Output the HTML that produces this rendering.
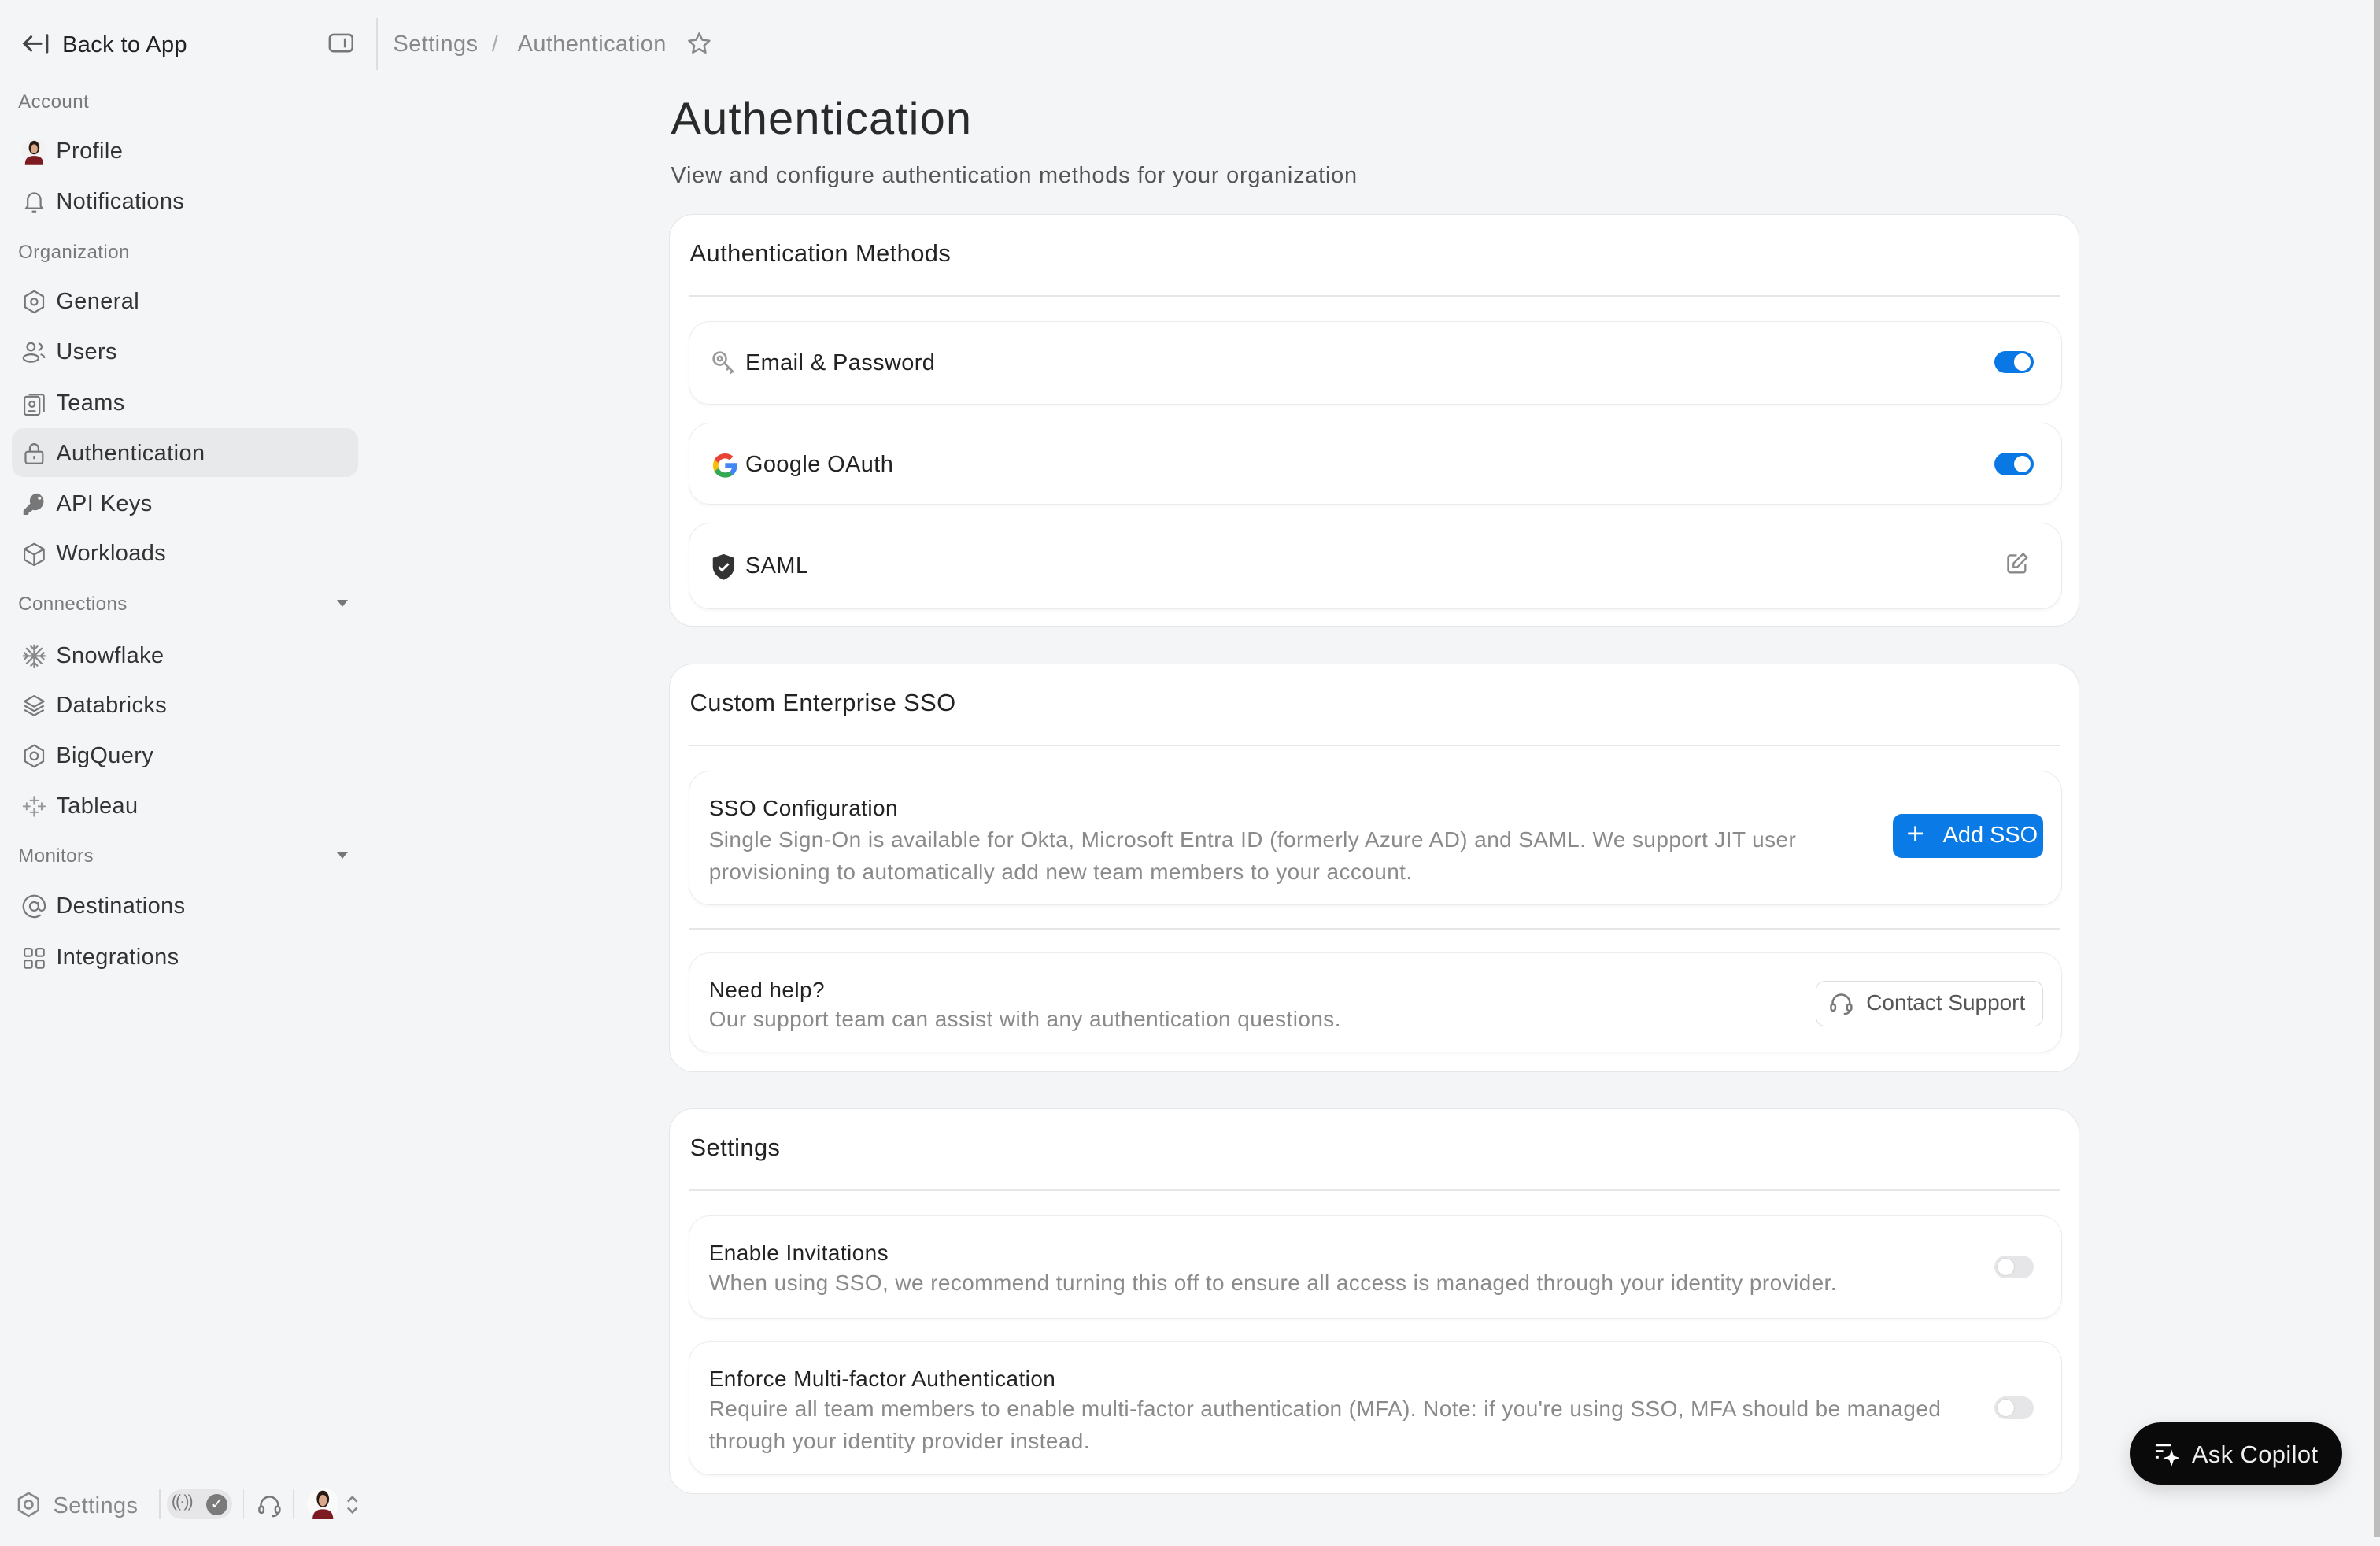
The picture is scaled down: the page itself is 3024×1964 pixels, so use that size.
<!DOCTYPE html>
<html><head><meta charset="utf-8"><style>
html,body{margin:0;padding:0}
html{zoom:1.92857}
body{width:1568px;height:1018px;background:#f4f5f7;font-family:"Liberation Sans",sans-serif;color:#2a2a2a;position:relative;overflow:hidden;letter-spacing:0.22px}
.a{position:absolute;white-space:nowrap}
.t15{font-size:15px;line-height:18px}
.lab{font-size:12.5px;color:#7a7a7a;line-height:15px}
.item{position:absolute;left:14px;height:20px;display:flex;align-items:center;font-size:15px;color:#333;margin-top:1px}
.item svg{width:17px;height:17px;margin-right:6px;flex:none}
.card{position:absolute;left:441px;width:929px;background:#fff;border:1px solid #e6e6e8;border-radius:16px;box-sizing:border-box}
.hd{position:absolute;left:13px;font-size:16px;color:#222}
.dv{position:absolute;left:12px;right:12px;height:1px;background:#e6e6e8}
.row{position:absolute;left:12px;right:11px;border:1px solid #ececee;border-radius:14px;box-shadow:0 1px 2px rgba(0,0,0,.04);box-sizing:border-box}
.tg{position:absolute;width:26px;height:15px;border-radius:8px}
.tg i{position:absolute;top:2px;width:11px;height:11px;border-radius:50%;background:#fff}
.on{background:#0a78e4}.on i{right:2px}
.off{background:#e6e6e8}.off i{left:2px;box-shadow:0 0 1px rgba(0,0,0,.2)}
.ti{position:absolute;left:13px;font-size:14.5px;color:#222;margin-top:1px}
.ds{position:absolute;left:13px;font-size:14.5px;color:#8a8a8a;line-height:21px;margin-top:1px}
</style></head><body>
<svg class="a" style="left:14px;top:20px" width="19" height="17" viewBox="0 0 19 17" fill="none" stroke="#444" stroke-width="1.6" stroke-linecap="round"><path d="M13 8.5H2M6.5 4L2 8.5 6.5 13M17 3v11"/></svg>
<div class="a t15" style="left:41px;top:21px;color:#222">Back to App</div>
<svg class="a" style="left:216px;top:22px" width="17" height="13" viewBox="0 0 17 13" fill="none" stroke="#777" stroke-width="1.4"><rect x="1" y="1" width="15" height="11" rx="2.5"/><path d="M11 3.5v6"/></svg>
<div class="a" style="left:248px;top:12px;width:1px;height:34px;background:#ddd"></div>
<div class="a t15" style="left:259px;top:20px;color:#888">Settings</div>
<div class="a t15" style="left:324px;top:20px;color:#aaa">/</div>
<div class="a t15" style="left:341px;top:20px;color:#888">Authentication</div>
<svg class="a" style="left:452px;top:20px" width="17" height="17" viewBox="0 0 24 24" fill="none" stroke="#888" stroke-width="1.8" stroke-linejoin="round"><path d="M12 2.5l2.9 6 6.6.8-4.9 4.5 1.3 6.5L12 17l-5.9 3.3 1.3-6.5L2.5 9.3l6.6-.8z"/></svg>

<div class="a lab" style="left:12px;top:60px">Account</div>
<div class="item" style="top:89px"><svg viewBox="0 0 17 17"><circle cx="8.5" cy="8.5" r="8.5" fill="#f2f2f2"/><path d="M2.5 17c0-4 2-5.5 6-5.5s6 1.5 6 5.5z" fill="#7d1a22"/><ellipse cx="8.5" cy="6" rx="3.5" ry="4.5" fill="#2a1a14"/><ellipse cx="8.5" cy="6.8" rx="2.3" ry="3" fill="#d9a88a"/></svg>Profile</div>
<div class="item" style="top:122px"><svg viewBox="0 0 24 24" fill="none" stroke="#777" stroke-width="1.6"><path d="M6 16V10a6 6 0 0112 0v6l1.5 2h-15zM10 21h4"/></svg>Notifications</div>
<div class="a lab" style="left:12px;top:159px">Organization</div>
<div class="item" style="top:188px"><svg viewBox="0 0 24 24" fill="none" stroke="#777" stroke-width="1.6"><path d="M12 2l8.5 5v10L12 22l-8.5-5V7z"/><circle cx="12" cy="12" r="3"/></svg>General</div>
<div class="item" style="top:221px"><svg viewBox="0 0 24 24" fill="none" stroke="#777" stroke-width="1.6"><circle cx="9" cy="7" r="3.5"/><path d="M16 4a3 3 0 010 6"/><ellipse cx="9" cy="17.5" rx="7" ry="3.5"/><path d="M18 14c2 .6 3.5 1.8 3.5 3.5"/></svg>Users</div>
<div class="item" style="top:255px"><svg viewBox="0 0 24 24" fill="none" stroke="#777" stroke-width="1.6"><rect x="3" y="5" width="14" height="17" rx="2"/><path d="M7 3h12a2 2 0 012 2v14"/><circle cx="10" cy="12" r="2.5"/><path d="M6.5 18.5h7"/></svg>Teams</div>
<div class="a" style="left:8px;top:282px;width:228px;height:32px;background:#e8e9eb;border-radius:8px"></div>
<div class="item" style="top:288px"><svg viewBox="0 0 24 24" fill="none" stroke="#777" stroke-width="1.6"><rect x="4" y="10" width="16" height="11" rx="2"/><path d="M8 10V7a4 4 0 018 0v3M12 14v3"/></svg>Authentication</div>
<div class="item" style="top:321px"><svg viewBox="0 0 24 24" fill="#777"><path d="M15 2a7 7 0 00-6.6 9.4L2 18v4h4l1-1v-2h2l1.6-1.6A7 7 0 1015 2zm2 6a1.5 1.5 0 110-3 1.5 1.5 0 010 3z"/></svg>API Keys</div>
<div class="item" style="top:354px"><svg viewBox="0 0 24 24" fill="none" stroke="#777" stroke-width="1.6" stroke-linejoin="round"><path d="M12 2l9 5v10l-9 5-9-5V7zM3 7l9 5 9-5M12 12v10"/></svg>Workloads</div>
<div class="a lab" style="left:12px;top:391px">Connections</div>
<div class="a" style="left:222px;top:395px;border:4px solid transparent;border-top:5px solid #777"></div>
<div class="item" style="top:421px"><svg viewBox="0 0 24 24" fill="none" stroke="#888" stroke-width="1.6" stroke-linecap="round"><path d="M12 2v20M2 12h20M5 5l14 14M19 5L5 19M9 3l3 3 3-3M9 21l3-3 3 3M3 9l3 3-3 3M21 9l-3 3 3 3"/></svg>Snowflake</div>
<div class="item" style="top:454px"><svg viewBox="0 0 24 24" fill="none" stroke="#777" stroke-width="1.6" stroke-linejoin="round"><path d="M12 3l9 5-9 5-9-5zM3 12l9 5 9-5M3 16l9 5 9-5"/></svg>Databricks</div>
<div class="item" style="top:487px"><svg viewBox="0 0 24 24" fill="none" stroke="#777" stroke-width="1.6"><path d="M12 2l8.5 5v10L12 22l-8.5-5V7z"/><circle cx="12" cy="12" r="3.5"/></svg>BigQuery</div>
<div class="item" style="top:520px"><svg viewBox="0 0 24 24" fill="none" stroke="#999" stroke-width="1.5" stroke-linecap="round"><path d="M12 3v7M8.5 6.5h7M12 14v7M8.5 17.5h7M5 9v6M2 12h6M19 9v6M16 12h6"/></svg>Tableau</div>
<div class="a lab" style="left:12px;top:557px">Monitors</div>
<div class="a" style="left:222px;top:561px;border:4px solid transparent;border-top:5px solid #777"></div>
<div class="item" style="top:586px"><svg viewBox="0 0 24 24" fill="none" stroke="#777" stroke-width="1.6"><circle cx="12" cy="12" r="4"/><path d="M16 8v5a3 3 0 006 0v-1a10 10 0 10-4 8"/></svg>Destinations</div>
<div class="item" style="top:620px"><svg viewBox="0 0 24 24" fill="none" stroke="#777" stroke-width="1.6"><rect x="3" y="3" width="7" height="7" rx="1.5"/><rect x="14" y="3" width="7" height="7" rx="1.5"/><rect x="3" y="14" width="7" height="7" rx="1.5"/><rect x="14" y="14" width="7" height="7" rx="1.5"/></svg>Integrations</div>

<svg class="a" style="left:10px;top:982px" width="18" height="18" viewBox="0 0 24 24" fill="none" stroke="#888" stroke-width="1.8"><path d="M12 2l8.5 5v10L12 22l-8.5-5V7z"/><circle cx="12" cy="12" r="3.5"/></svg>
<div class="a t15" style="left:35px;top:983px;color:#888">Settings</div>
<div class="a" style="left:105px;top:981px;width:1px;height:20px;background:#ddd"></div>
<div class="a" style="left:110px;top:981px;width:43px;height:20px;border-radius:10px;background:#e6e6e8"></div>
<div class="a" style="left:113px;top:983px;font-size:11px;color:#777;letter-spacing:-1px">((·))</div>
<div class="a" style="left:136px;top:984px;width:14px;height:14px;border-radius:50%;background:#7a7a7a;color:#fff;font-size:10px;line-height:14px;text-align:center">✓</div>
<div class="a" style="left:160px;top:981px;width:1px;height:20px;background:#ddd"></div>
<svg class="a" style="left:169px;top:983px" width="17" height="17" viewBox="0 0 24 24" fill="none" stroke="#777" stroke-width="1.8"><path d="M4 14v-2a8 8 0 0116 0v2"/><rect x="2.5" y="13" width="4" height="6" rx="2"/><rect x="17.5" y="13" width="4" height="6" rx="2"/><path d="M19.5 19c0 2-2 3-5 3"/></svg>
<div class="a" style="left:193px;top:981px;width:1px;height:20px;background:#ddd"></div>
<svg class="a" style="left:202px;top:980px" width="21" height="21" viewBox="0 0 17 17"><circle cx="8.5" cy="8.5" r="8.5" fill="#fafafa"/><path d="M3 17c0-4 2-5.5 5.5-5.5s5.5 1.5 5.5 5.5z" fill="#7d1a22"/><ellipse cx="8.5" cy="6" rx="3.3" ry="4.5" fill="#2a1a14"/><ellipse cx="8.5" cy="6.8" rx="2.2" ry="3" fill="#d9a88a"/></svg>
<svg class="a" style="left:228px;top:985px" width="8" height="12" viewBox="0 0 8 12" fill="none" stroke="#888" stroke-width="1.4"><path d="M1 4l3-3 3 3M1 8l3 3 3-3"/></svg>

<div class="a" style="left:442px;top:61px;font-size:30px;color:#2a2a2a;letter-spacing:0.6px">Authentication</div>
<div class="a t15" style="left:442px;top:107px;color:#555;letter-spacing:0.4px">View and configure authentication methods for your organization</div>

<div class="card" style="top:141px;height:272px">
 <div class="hd" style="top:16px">Authentication Methods</div>
 <div class="dv" style="top:53px"></div>
 <div class="row" style="top:70px;height:55px">
  <svg class="a" style="left:14px;top:18px" width="18" height="18" viewBox="0 0 24 24" fill="none" stroke="#999" stroke-width="1.8"><circle cx="8" cy="8" r="5.5"/><circle cx="8" cy="8" r="1.8"/><path d="M12 12l8 8M16 16l-2 2M19 19l-2 2"/></svg>
  <div class="a t15" style="left:37px;top:18px;color:#222">Email &amp; Password</div>
  <div class="tg on" style="left:860px;top:19px"><i></i></div>
 </div>
 <div class="row" style="top:137px;height:54px">
  <svg class="a" style="left:14px;top:18px" width="19" height="19" viewBox="0 0 48 48"><path fill="#4285f4" d="M44 24.5c0-1.6-.1-2.8-.4-4.5H24v8h11.3c-.5 3-2.5 5.5-5.4 7l7 5.4C41 36.5 44 31 44 24.5z"/><path fill="#34a853" d="M24 44c5.4 0 10-1.8 13-4.6l-7-5.4c-1.6 1.1-3.7 1.8-6 1.8-5 0-9.2-3.3-10.700-7.9l-7.3 5.6C9.3 39.500 16.100 44 24 44z"/><path fill="#fbbc05" d="M13.3 27.9c-.4-1.2-.6-2.5-.6-3.9s.2-2.7.6-3.9L6 14.5C4.7 17.4 4 20.6 4 24s.7 6.6 2 9.5z"/><path fill="#ea4335" d="M24 12.2c2.9 0 5.4 1 7.3 2.8l5.9-5.9C33.9 6 29.4 4 24 4 16.1 4 9.3 8.5 6 14.5l7.3 5.6C14.8 15.5 19 12.2 24 12.2z"/></svg>
  <div class="a t15" style="left:37px;top:18px;color:#222">Google OAuth</div>
  <div class="tg on" style="left:860px;top:19px"><i></i></div>
 </div>
 <div class="row" style="top:203px;height:57px">
  <svg class="a" style="left:14px;top:19px" width="17" height="19" viewBox="0 0 24 26"><path fill="#333" d="M12 1l10 3.5v8c0 6-4.5 10.5-10 12.5C6.5 23 2 18.5 2 12.5v-8z"/><path d="M7.5 13l3 3 6-6" stroke="#fff" stroke-width="2.2" fill="none"/></svg>
  <div class="a t15" style="left:37px;top:19px;color:#222">SAML</div>
  <svg class="a" style="left:866px;top:18px" width="17" height="17" viewBox="0 0 24 24" fill="none" stroke="#888" stroke-width="1.7" stroke-linejoin="round"><path d="M12 4H6a2 2 0 00-2 2v12a2 2 0 002 2h12a2 2 0 002-2v-6"/><path d="M18 2.5l3.5 3.5-9 9H9v-3.5z"/></svg>
 </div>
</div>

<div class="card" style="top:437px;height:269px">
 <div class="hd" style="top:16px">Custom Enterprise SSO</div>
 <div class="dv" style="top:53px"></div>
 <div class="row" style="top:70px;height:89px">
  <div class="ti" style="top:15px">SSO Configuration</div>
  <div class="ds" style="top:34px">Single Sign-On is available for Okta, Microsoft Entra ID (formerly Azure AD) and SAML. We support JIT user<br>provisioning to automatically add new team members to your account.</div>
  <div class="a" style="left:793px;top:28px;width:99px;height:29px;background:#0a7ae6;border-radius:6px;color:#fff;font-size:15px;line-height:29px;letter-spacing:0"><span style="position:absolute;left:9px;top:-1px;font-size:20px">+</span><span style="position:absolute;left:33px">Add SSO</span></div>
 </div>
 <div class="dv" style="top:174px"></div>
 <div class="row" style="top:190px;height:66px">
  <div class="ti" style="top:15px">Need help?</div>
  <div class="ds" style="top:32px">Our support team can assist with any authentication questions.</div>
  <div class="a" style="left:742px;top:18px;width:150px;height:30px;border:1px solid #ddd;border-radius:6px;box-sizing:border-box;background:#fff;font-size:14.5px;color:#555;line-height:28px;letter-spacing:0">
   <svg class="a" style="left:8px;top:6px" width="17" height="17" viewBox="0 0 24 24" fill="none" stroke="#777" stroke-width="1.8"><path d="M4 14v-2a8 8 0 0116 0v2"/><rect x="2.5" y="13" width="4" height="6" rx="2"/><rect x="17.5" y="13" width="4" height="6" rx="2"/><path d="M19.5 19c0 2-2 3-5 3"/></svg>
   <span style="position:absolute;left:33px">Contact Support</span></div>
 </div>
</div>

<div class="card" style="top:730px;height:254px">
 <div class="hd" style="top:16px">Settings</div>
 <div class="dv" style="top:53px"></div>
 <div class="row" style="top:70px;height:68px">
  <div class="ti" style="top:15px">Enable Invitations</div>
  <div class="ds" style="top:33px">When using SSO, we recommend turning this off to ensure all access is managed through your identity provider.</div>
  <div class="tg off" style="left:860px;top:26px"><i></i></div>
 </div>
 <div class="row" style="top:153px;height:88px">
  <div class="ti" style="top:15px">Enforce Multi-factor Authentication</div>
  <div class="ds" style="top:33px">Require all team members to enable multi-factor authentication (MFA). Note: if you're using SSO, MFA should be managed<br>through your identity provider instead.</div>
  <div class="tg off" style="left:860px;top:36px"><i></i></div>
 </div>
</div>

<div class="a" style="left:1403px;top:937px;width:140px;height:41px;background:#0a0a0a;border-radius:21px;box-shadow:0 4px 12px rgba(0,0,0,.15)">
 <svg class="a" style="left:16px;top:13px" width="17" height="16" viewBox="0 0 17 16" fill="none" stroke="#fff" stroke-width="1.5"><path d="M1 2h10M1 6h5M1 10h2"/><path d="M11.5 6.5l1 3 3 1-3 1-1 3-1-3-3-1 3-1z" fill="#fff" stroke-width="1"/></svg>
 <div class="a" style="left:41px;top:12px;font-size:16px;color:#eee">Ask Copilot</div>
</div>
<div class="a" style="left:1564px;top:0;width:4px;height:1012px;background:#bdbdbd"></div>
</body></html>
